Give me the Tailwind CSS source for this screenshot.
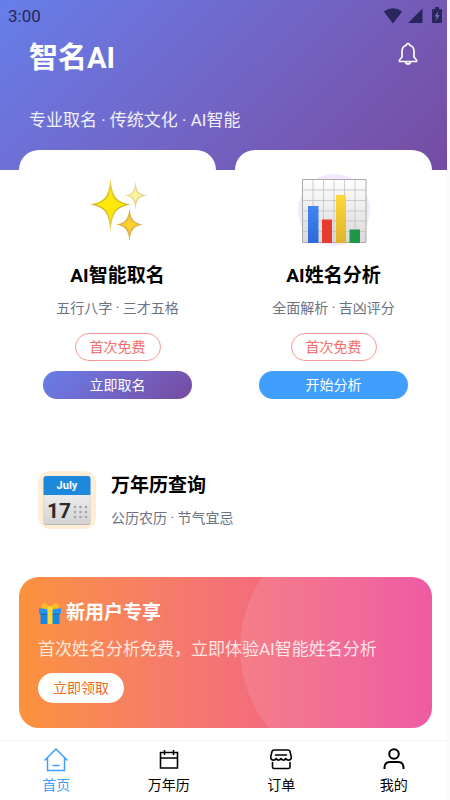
<!DOCTYPE html>
<html lang="zh-CN">
<head>
<meta charset="utf-8">
<meta name="viewport" content="width=device-width, initial-scale=1">
<title>智名AI</title>
<script src="https://cdn.jsdelivr.net/npm/@tailwindcss/browser@4"></script>
</head>
<body class="flex min-h-screen flex-col border-r-3 border-[#fafafa] bg-white font-['Roboto','Noto_Sans_CJK_SC',sans-serif] text-black">

<header class="bg-linear-135 from-[#667eea] to-[#764ba2] pb-[38px]">
  <div class="flex h-8 items-center justify-between pr-1 pl-2 text-[#28265a]">
    <span class="text-[17px] leading-5">3:00</span>
    <div class="flex items-center">
      <svg class="h-5 w-5" viewBox="0 0 20 20" fill="currentColor" aria-hidden="true"><path d="M.8 5.1Q10-1.400 19.2 5.100L10 17Z" transform="translate(0 .5)"/></svg>
      <svg class="ml-1 h-5 w-4" viewBox="0 0 16 20" fill="currentColor" aria-hidden="true"><path d="M15.500 2.500v14.500H1Z"/></svg>
      <svg class="ml-2 h-5 w-3" viewBox="0 0 12 20" aria-hidden="true"><path fill="currentColor" d="M4 1h4v2h2q1 0 1 1v12q0 1-1 1H2q-1 0-1-1V4q0-1 1-1h2Z"/><path fill="#7d6fc0" d="M7.500 5 3.500 10.500H6L4.700 15 8.700 9.300H6.300Z"/></svg>
    </div>
  </div>
  <div class="flex items-center justify-between pt-1.5 pr-[27px] pl-[29px]">
    <h1 class="text-[29px] leading-10 font-bold text-white">智名AI</h1>
    <button type="button" aria-label="通知" class="-mt-2 text-white">
      <svg class="h-6 w-6" viewBox="0 0 24 24" fill="none" stroke="currentColor" stroke-width="1.700" stroke-linejoin="round" aria-hidden="true"><path d="M10.300 3.300Q10.300 1.500 12 1.500T13.700 3.300C17 4.200 18 6.500 18 9.500V15L20.500 18V19.500H3.500V18L6 15V9.500C6 6.500 7 4.200 10.300 3.300Z"/><path d="M9.700 20Q10 22 12 22T14.300 20"/></svg>
    </button>
  </div>
  <p class="mt-[30px] ml-[29px] text-[17px] leading-6 text-white/90">专业取名 · 传统文化 · AI智能</p>
</header>

<main class="-mt-5 flex-1 pr-[15px] pl-[19px]">
  <div class="grid grid-cols-2 gap-[19px]">
    <section class="flex flex-col items-center rounded-[20px] bg-white px-6 pt-6 pb-6 text-center">
      <div class="flex h-18 w-18 items-center justify-center">
        <svg class="h-18 w-18" viewBox="0 0 72 72" aria-hidden="true">
          <defs>
            <linearGradient id="s1" x2="0" y2="1"><stop stop-color="#e8d55a"/><stop offset=".5" stop-color="#d5b91e"/><stop offset="1" stop-color="#e0cf62"/></linearGradient>
          </defs>
          <path fill="url(#s1)" d="M28.500 4C30.500 22 33 27.500 49 30.500C33 33.500 30.500 39 28.500 58C26.500 39 24 33.500 8 30.500C24 27.500 26.500 22 28.500 4Z"/>
          <path fill="#fde80c" d="M28.500 14C30.500 24 33 27.500 43 30.500C33 33.500 30.500 38 28.500 48C26.500 38 24 33.500 14 30.500C24 27.500 26.500 24 28.500 14Z"/>
          <path fill="#e3d693" d="M53.500 7C54.500 17 56 20 65 21.500C56 23 54.500 26 53.500 36C52.500 26 51 23 43 21.500C51 20 52.500 17 53.500 7Z"/>
          <path fill="#fff59d" d="M53.500 14C54.500 19 56 20.500 60 21.500C56 22.500 54.500 24 53.500 29C52.500 24 51 22.500 47 21.500C51 20.500 52.500 19 53.500 14Z"/>
          <path fill="#ddb548" d="M47.500 34C49 45.500 51 48.500 61 50.500C51 52.500 49 56 47.500 67C46 56 44 52.500 34 50.500C44 48.500 46 45.500 47.500 34Z"/>
          <path fill="#fdd12b" d="M47.500 42C49 47.500 51 49 56 50.500C51 52 49 53.500 47.500 59C46 53.500 44 52 39 50.500C44 49 46 47.500 47.500 42Z"/>
        </svg>
      </div>
      <h2 class="mt-4 text-[19px] leading-7 font-bold">AI智能取名</h2>
      <p class="mt-2 text-[14px] leading-5 text-[#6b7280]">五行八字 · 三才五格</p>
      <span class="mt-[15px] rounded-full border border-[#f89898] px-3.5 text-[14px] leading-[26px] text-[#f56c6c]">首次免费</span>
      <button type="button" class="mt-2.5 h-7 w-full rounded-full bg-linear-135 from-[#667eea] to-[#764ba2] text-[14px] text-white">立即取名</button>
    </section>

    <section class="flex flex-col items-center rounded-[20px] bg-white px-6 pt-6 pb-6 text-center">
      <div class="flex h-18 w-18 items-center justify-center rounded-full bg-[#f3e8ff]">
        <svg class="h-18 w-18" viewBox="0 0 72 72" aria-hidden="true">
          <defs>
            <linearGradient id="g1" x2="0" y2="1"><stop stop-color="#fefefe"/><stop offset="1" stop-color="#d9d9d9"/></linearGradient>
            <linearGradient id="g2" x2="0" y2="1"><stop stop-color="#4285f4"/><stop offset="1" stop-color="#2f68d8"/></linearGradient>
            <linearGradient id="g3" x2="0" y2="1"><stop stop-color="#fdd835"/><stop offset="1" stop-color="#dfb32c"/></linearGradient>
          </defs>
          <path fill="url(#g1)" stroke="#aaa" d="M4.500 5.500H68V68.500H4.500Z"/>
          <path fill="none" stroke="#c2c2c2" stroke-width=".8" d="M15 6V68M25.500 6V68M36 6V68M46.500 6V68M57 6V68M5 16H68M5 26.500H68M5 37H68M5 47H68M5 57.500H68"/>
          <path fill="url(#g2)" d="M10 32H20.500V69H10Z"/>
          <path fill="#e93b2d" d="M24 45.500H34V69H24Z"/>
          <path fill="url(#g3)" d="M38 21H48V69H38Z"/>
          <path fill="#1e9748" d="M51.500 55.500H62V69H51.500Z"/>
        </svg>
      </div>
      <h2 class="mt-4 text-[19px] leading-7 font-bold">AI姓名分析</h2>
      <p class="mt-2 text-[14px] leading-5 text-[#6b7280]">全面解析 · 吉凶评分</p>
      <span class="mt-[15px] rounded-full border border-[#f89898] px-3.5 text-[14px] leading-[26px] text-[#f56c6c]">首次免费</span>
      <button type="button" class="mt-2.5 h-7 w-full rounded-full bg-[#409eff] text-[14px] text-white">开始分析</button>
    </section>
  </div>

  <section class="mt-7 flex items-center gap-[15px] rounded-[20px] bg-white py-5 pr-5 pl-[19px]">
    <div class="h-[58px] w-[58px] rounded-xl bg-[#ffedd5] p-px">
      <svg class="h-14 w-14" viewBox="0 0 56 56" role="img" aria-label="日历">
        <defs><linearGradient id="c1" x2="0" y2="1"><stop stop-color="#fafafa"/><stop offset="1" stop-color="#d4d4d4"/></linearGradient></defs>
        <rect x="4.500" y="4" width="47" height="49" rx="3" fill="#b7b7b7"/>
        <rect x="4.500" y="4" width="47" height="48" rx="3" fill="url(#c1)"/>
        <path fill="#1e88dc" d="M4.500 23V7q0-3 3-3H48.500q3 0 3 3V23Z"/>
        <text x="28" y="17" text-anchor="middle" font-size="11" class="font-bold" fill="#fff">July</text>
        <text x="8" y="46" font-size="21" class="font-bold" fill="#2b2b2b">17</text>
        <path fill="none" stroke="#a5a5a5" stroke-width="2.600" stroke-linecap="round" stroke-dasharray="0 5.500" d="M36 35H48M36 40H48M36 45H48"/>
      </svg>
    </div>
    <div>
      <h2 class="text-[19px] leading-7 font-bold">万年历查询</h2>
      <p class="mt-2 text-[14px] leading-5 text-[#6b7280]">公历农历 · 节气宜忌</p>
    </div>
  </section>

  <section class="relative mt-7 overflow-hidden rounded-[20px] bg-linear-to-r from-[#fb923c] to-[#ec4899] px-[19px] pt-5 pb-[25px] text-white">
    <div class="absolute -top-[54px] -right-[58px] h-[250px] w-[250px] rounded-full bg-white/10"></div>
    <div class="relative">
      <h2 class="flex items-center gap-1 text-[19px] leading-8 font-bold">
        <svg class="h-6 w-6" viewBox="0 0 24 24" aria-hidden="true">
          <path fill="#1a86dd" d="M2.500 10H21.500V23H2.500Z"/><path fill="#2196f3" d="M1 7.500H23V12L21.500 13H2.500L1 12Z"/><path fill="#1673c2" d="M2.500 12.500H21.500V14H2.500Z"/>
          <path fill="#fdd835" d="M9.500 7.500H14.500V23H9.500Z"/><path fill="#f6b928" d="M11 8C6 8 3 7.500 3 5.500S5.500 1 8 2.500 11.500 6 12 7.500C12.500 6 13.500 4 16 2.500S21 3.500 21 5.500 18 8 13 8Z"/><path fill="#fdd835" d="M9.500 7L11 5H13L14.500 7V9.500H9.500Z"/>
        </svg>新用户专享</h2>
      <p class="mt-2 text-[17px] leading-6 text-white/80">首次姓名分析免费，立即体验AI智能姓名分析</p>
      <button type="button" class="mt-3 block h-[30px] rounded-full bg-white px-[15px] text-[14px] text-[#ea6a1a]">立即领取</button>
    </div>
  </section>
</main>

<nav class="mt-3 -mr-[3px] grid h-[60px] grid-cols-4 border-t border-[#f3f3f3] bg-white text-[14px] leading-5">
  <a href="#home" class="flex flex-col items-center pt-1.5 text-[#409eff]">
    <svg class="h-7 w-7" viewBox="0 0 28 28" fill="none" stroke="currentColor" stroke-width="1.500" aria-hidden="true"><path d="M2.500 13.500 14 2 25.500 13.500M5.500 11V23.500H22.500V11M10.500 18.500H17.500"/></svg>
    <span>首页</span>
  </a>
  <a href="#calendar" class="flex flex-col items-center pt-1.5">
    <svg class="h-7 w-7" viewBox="0 0 28 28" fill="none" stroke="currentColor" stroke-width="1.600" aria-hidden="true"><path d="M5.500 5.500H22.500V21H5.500ZM5.500 11H22.500M9.500 3V8M18.500 3V8"/></svg>
    <span>万年历</span>
  </a>
  <a href="#orders" class="flex flex-col items-center pt-1.5">
    <svg class="h-7 w-7" viewBox="0 0 28 28" fill="none" stroke="currentColor" stroke-width="1.600" stroke-linecap="round" stroke-linejoin="round" aria-hidden="true"><path d="M7 3H21Q22.500 3 23 4.500L24.200 9.500V11.500Q23 13.500 21 13Q19.500 13 18.700 11.500Q17.500 13.500 16.200 13Q15 13 14 11.500Q13 13 11.800 13Q10.500 13.500 9.300 11.500Q8.500 13 7 13Q5 13.500 3.800 11.500V9.500L5 4.500Q5.500 3 7 3ZM8.500 8H19.500M5.500 15.500V20Q5.500 21.500 7 21.500H21.500Q23 21.500 23 20V15.500"/></svg>
    <span>订单</span>
  </a>
  <a href="#me" class="flex flex-col items-center pt-1.5">
    <svg class="h-7 w-7" viewBox="0 0 28 28" fill="none" stroke="currentColor" stroke-width="2" aria-hidden="true"><circle cx="14" cy="7" r="4.800"/><path d="M4.500 22V20Q5 15 10 15H18Q23 15 23.500 20V22"/></svg>
    <span>我的</span>
  </a>
</nav>
</body>
</html>
